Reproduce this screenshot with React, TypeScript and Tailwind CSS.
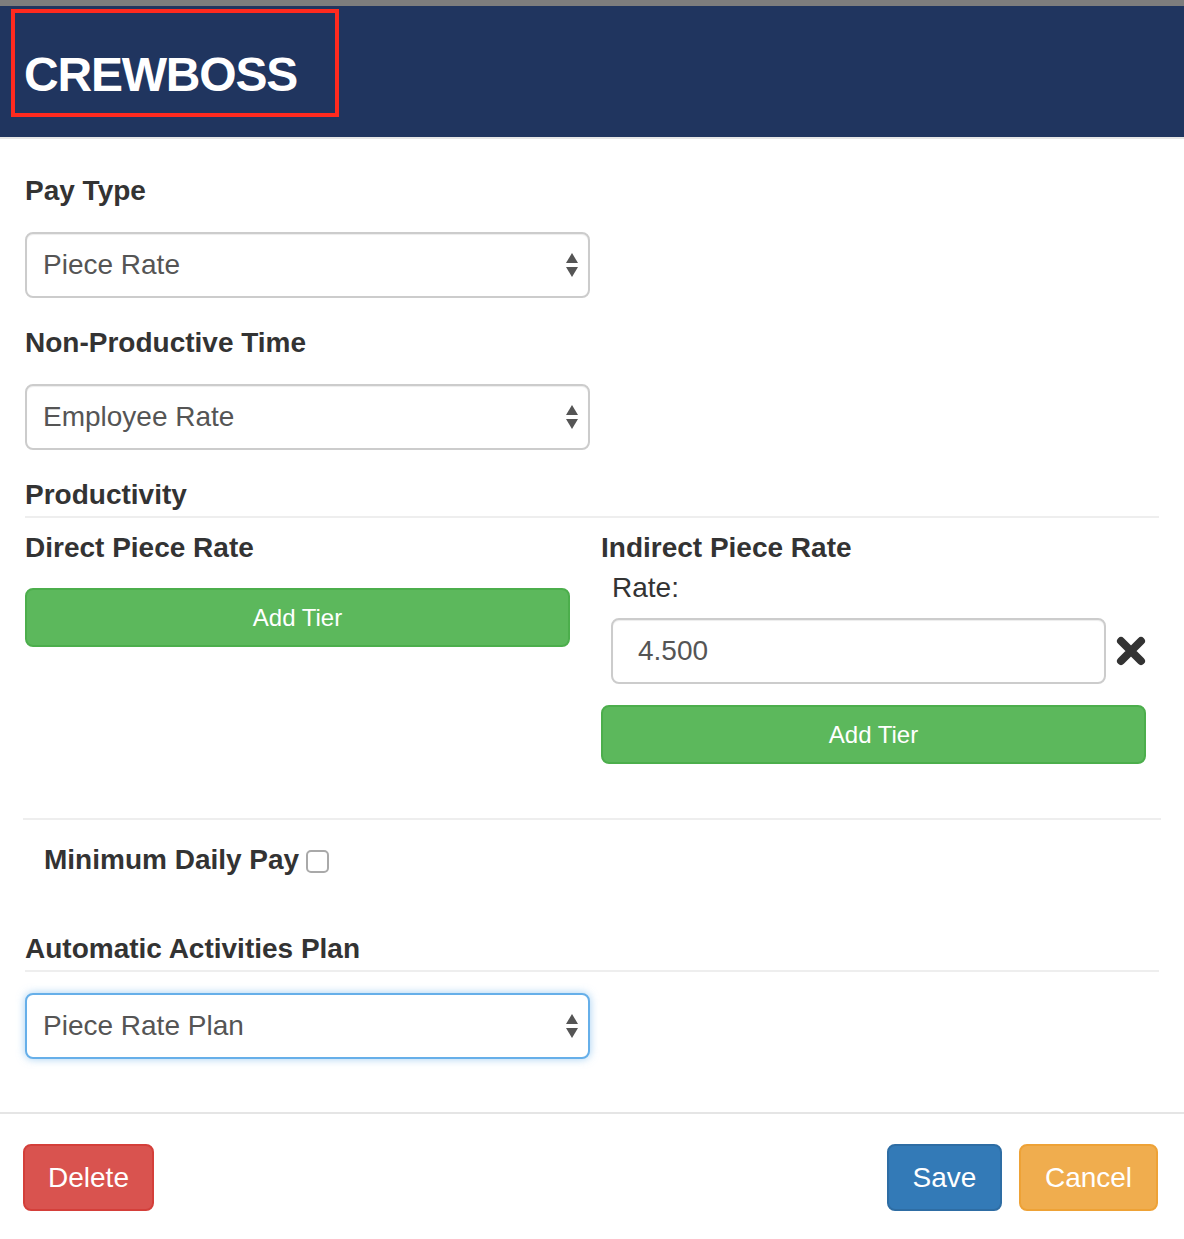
import React from "react";

const font = { fontFamily: '"Liberation Sans", Arial, sans-serif' };

const Arrows = () => (
  <svg width="14" height="26" viewBox="0 0 14 26" className="absolute right-[9px] top-1/2 -translate-y-1/2">
    <polygon points="7,1 13,11 1,11" fill="#555" />
    <polygon points="1,15 13,15 7,25" fill="#555" />
  </svg>
);

const SelectBox = ({ value, focused }: { value: string; focused?: boolean }) => (
  <div
    className={
      "relative flex h-[66px] w-[565px] items-center rounded-[8px] border-2 bg-white pl-[16px] text-[28px] text-[#555] " +
      (focused
        ? "border-[#66afe9] shadow-[0_0_8px_rgba(102,175,233,0.6)]"
        : "border-[#ccc] shadow-[inset_0_1px_1px_rgba(0,0,0,0.075)]")
    }
  >
    {value}
    <Arrows />
  </div>
);

const Label = ({ children, className = "" }: { children: React.ReactNode; className?: string }) => (
  <div className={"text-[28px] font-bold leading-[40px] text-[#333] " + className}>{children}</div>
);

const AddTier = () => (
  <button className="flex h-[59px] w-[545px] items-center justify-center rounded-[8px] border-2 border-[#4cae4c] bg-[#5cb85c] text-[24px] text-white">
    Add Tier
  </button>
);

const RemoveIcon = () => (
  <svg width="30" height="30" viewBox="0 0 30 30">
    <path d="M5 5 L25 25 M25 5 L5 25" stroke="#333" strokeWidth="8" strokeLinecap="round" />
  </svg>
);

export default function App() {
  return (
    <div className="min-h-[1239px] w-[1184px] bg-white" style={font}>
      {/* header */}
      <div className="h-[139px] border-t-[6px] border-b-2 border-t-[#7d7d7d] border-b-[#e6e6e6] bg-[#20355f] pl-[11px] pt-[3px]">
        <div className="h-[108px] w-[328px] border-4 border-[#ff2a1f] pl-[9px] pt-[38px]">
          <div className="text-[48px] font-bold leading-[48px] tracking-[-1.2px] text-white">CREWBOSS</div>
        </div>
      </div>

      <div className="px-[25px]">
        <Label className="mt-[32px]">Pay Type</Label>
        <div className="mt-[21px]">
          <SelectBox value="Piece Rate" />
        </div>

        <Label className="mt-[25px]">Non-Productive Time</Label>
        <div className="mt-[21px]">
          <SelectBox value="Employee Rate" />
        </div>

        <Label className="mt-[25px]">Productivity</Label>
        <div className="mt-px h-[2px] w-full bg-[#eee]" />

        <div className="mt-[10px] flex">
          <div className="w-[576px]">
            <Label>Direct Piece Rate</Label>
            <div className="mt-[20px]">
              <AddTier />
            </div>
          </div>
          <div className="w-[545px]">
            <Label>Indirect Piece Rate</Label>
            <div className="pl-[11px] text-[28px] leading-[40px] text-[#333]">Rate:</div>
            <div className="mt-[10px] flex items-center pl-[10px]">
              <div className="flex h-[66px] w-[495px] items-center rounded-[8px] border-2 border-[#ccc] pl-[25px] text-[28px] text-[#555] shadow-[inset_0_1px_1px_rgba(0,0,0,0.075)]">
                4.500
              </div>
              <div className="ml-[10px]">
                <RemoveIcon />
              </div>
            </div>
            <div className="mt-[21px]">
              <AddTier />
            </div>
          </div>
        </div>

        <div className="-mx-[2px] mt-[54px] h-[2px] bg-[#eee]" />

        <div className="mt-[20px] flex items-center pl-[19px]">
          <Label>Minimum Daily Pay</Label>
          <div className="ml-[7px] mt-[2px] h-[23px] w-[23px] rounded-[5px] border-2 border-[#a9a9a9] bg-white" />
        </div>

        <Label className="mt-[49px]">Automatic Activities Plan</Label>
        <div className="mt-px h-[2px] w-full bg-[#eee]" />
        <div className="mt-[21px]">
          <SelectBox value="Piece Rate Plan" focused />
        </div>
      </div>

      <div className="mt-[53px] h-[2px] w-full bg-[#e5e5e5]" />

      <div className="mt-[30px] flex items-center justify-between pl-[23px] pr-[26px]">
        <button className="h-[67px] w-[131px] rounded-[8px] border-2 border-[#d43f3a] bg-[#d9534f] text-[28px] text-white">
          Delete
        </button>
        <div className="flex gap-[17px]">
          <button className="h-[67px] w-[115px] rounded-[8px] border-2 border-[#2e6da4] bg-[#337ab7] text-[28px] text-white">
            Save
          </button>
          <button className="h-[67px] w-[139px] rounded-[8px] border-2 border-[#eea236] bg-[#f0ad4e] text-[28px] text-white">
            Cancel
          </button>
        </div>
      </div>
    </div>
  );
}
